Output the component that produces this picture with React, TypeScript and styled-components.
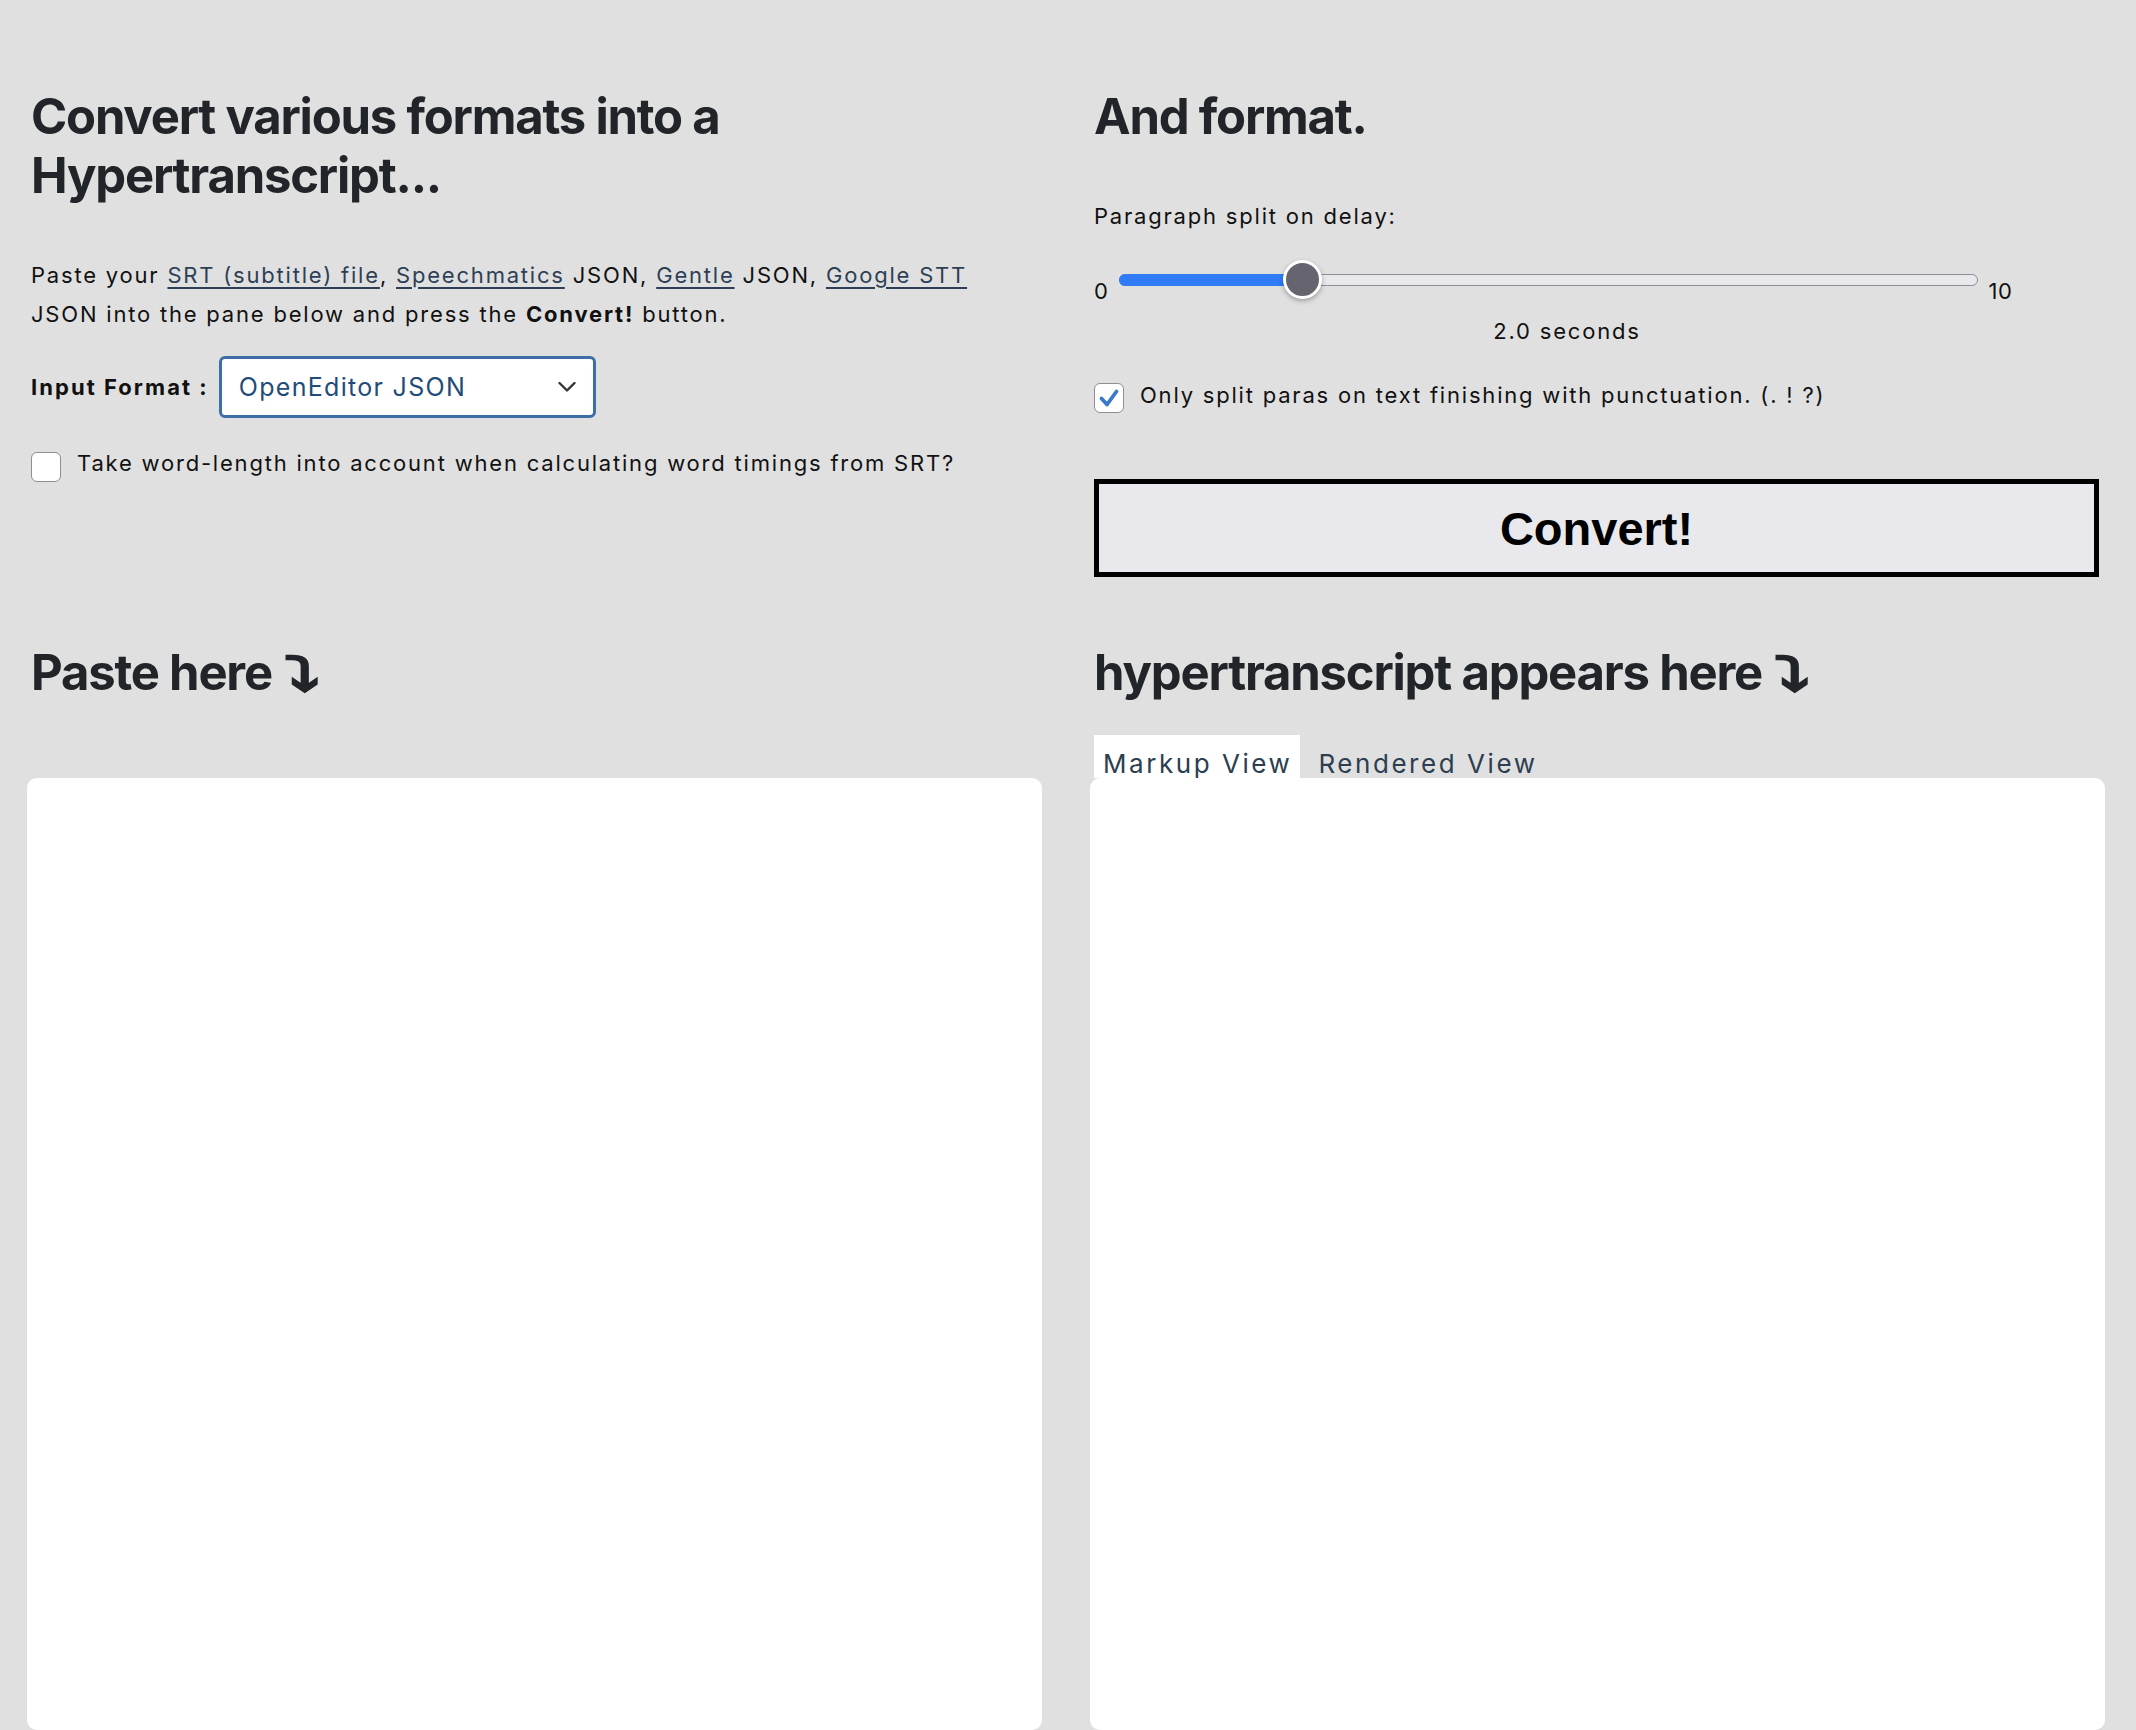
import React from 'react';
import styled, { createGlobalStyle } from 'styled-components';

const GlobalStyle = createGlobalStyle`
  html, body { margin: 0; padding: 0; background: #e0e0e0; }
  body { font-family: Inter, "Noto Sans", sans-serif; color: #111; overflow: hidden; }
  * { box-sizing: border-box; }
`;

const Page = styled.div`
  padding: 87px 31px 0 27px;
  height: 1730px;
  overflow: hidden;
`;

const Grid = styled.section<{ $top?: number }>`
  display: grid;
  grid-template-columns: 1015px 1015px;
  column-gap: 48px;
  align-items: start;
  margin-top: ${(p) => p.$top ?? 0}px;
`;

const Column = styled.div`
  display: flex;
  flex-direction: column;
  padding: 0 6px 0 4px;
`;

const PaneColumn = styled.div`
  display: flex;
  flex-direction: column;
`;

const Title = styled.h1<{ $after?: number }>`
  margin: 0 0 ${(p) => p.$after ?? 0}px;
  font-size: 49px;
  line-height: 59px;
  font-weight: 700;
  color: #212529;
  letter-spacing: -1.2px;
`;

const PaneTitle = styled(Title)`
  padding-left: 4px;
`;

const Arrow = styled.span`
  display: inline-block;
  font-family: "DejaVu Sans", sans-serif;
  font-weight: 700;
  font-size: 46px;
  line-height: 0;
  transform: scaleX(1.55);
  transform-origin: left center;
  -webkit-text-stroke: 1.2px #212529;
  margin-left: 2px;
`;

const Para = styled.p<{ $top: number }>`
  margin: ${(p) => p.$top}px 0 0;
  max-width: 985px;
  font-size: 22px;
  line-height: 39px;
  letter-spacing: 1.8px;
  color: #111;
`;

const Link = styled.a`
  color: #2d3f55;
  text-decoration: underline;
  text-decoration-thickness: 1.5px;
  text-underline-offset: 4px;
`;

const FormatRow = styled.div`
  display: flex;
  align-items: center;
  gap: 10px;
  margin-top: 22.5px;
`;

const FieldLabel = styled.label`
  font-size: 22px;
  line-height: 27px;
  font-weight: 700;
  letter-spacing: 2.05px;
  color: #111;
`;

const SelectWrap = styled.div`
  position: relative;
  width: 377px;
  height: 62px;
`;

const Select = styled.select`
  appearance: none;
  -webkit-appearance: none;
  width: 100%;
  height: 100%;
  border: 3px solid #3d6ea6;
  border-radius: 6px;
  background: #fff;
  color: #1f4c78;
  font-family: Inter, "Noto Sans", sans-serif;
  font-size: 25px;
  letter-spacing: 1.3px;
  padding: 0 44px 0 17px;
  outline: none;
`;

const Chevron = styled.svg`
  position: absolute;
  right: 20px;
  top: 50%;
  transform: translateY(-50%);
  pointer-events: none;
`;

const CheckRow = styled.label<{ $top: number }>`
  display: flex;
  align-items: center;
  gap: 16px;
  margin-top: ${(p) => p.$top}px;
  font-size: 22px;
  letter-spacing: 1.8px;
  color: #111;
`;

const Box = styled.span<{ $on?: boolean }>`
  flex-shrink: 0;
  width: 30px;
  height: 30px;
  border: 1.5px solid #8e8e93;
  border-radius: 6px;
  background: #fff;
  display: flex;
  align-items: center;
  justify-content: center;
`;

const CheckText = styled.span`
  line-height: 27px;
  padding-bottom: 6px;
`;

const SliderRow = styled.div`
  display: flex;
  align-items: flex-start;
  margin-top: 24px;
`;

const Num = styled.span`
  margin-top: 18px;
  font-size: 22px;
  line-height: 27px;
  letter-spacing: 0.6px;
  color: #111;
`;

const Slider = styled.div`
  position: relative;
  width: 859px;
  height: 39px;
  margin: 0 10px 0 11px;
`;

const Track = styled.div`
  position: absolute;
  left: 0;
  right: 0;
  top: 14px;
  height: 12px;
  border-radius: 6px;
  background: #e8e8ed;
  border: 1.5px solid #8f8e99;
`;

const Fill = styled.div`
  position: absolute;
  left: 0;
  top: 14px;
  height: 12px;
  border-radius: 6px 0 0 6px;
  background: #2f7cf6;
`;

const Thumb = styled.div`
  position: absolute;
  top: 0;
  width: 39px;
  height: 39px;
  border-radius: 50%;
  background: #66656f;
  border: 3.5px solid #fff;
  box-shadow: 0 2px 5px rgba(0, 0, 0, 0.3);
`;

const Seconds = styled.div`
  width: 946px;
  margin-top: 13px;
  text-align: center;
  font-size: 22px;
  line-height: 27px;
  letter-spacing: 1.8px;
  color: #111;
`;

const ConvertButton = styled.button`
  margin-top: 64.5px;
  width: 100%;
  height: 98px;
  border: 5px solid #000;
  border-radius: 0;
  background: #e9e9ed;
  color: #000;
  font-family: "Liberation Sans", Arial, sans-serif;
  font-weight: 700;
  font-size: 47px;
  cursor: pointer;
`;

const Tabs = styled.div`
  display: flex;
  gap: 9px;
  padding-left: 4px;
  height: 43px;
`;

const Tab = styled.button<{ $active?: boolean }>`
  height: 43px;
  padding: 14px 8px 0 9px;
  border: none;
  border-radius: 0;
  background: ${(p) => (p.$active ? '#fff' : 'transparent')};
  color: #2c3e50;
  font-family: Inter, "Noto Sans", sans-serif;
  font-size: 26px;
  line-height: 27px;
  letter-spacing: 2.55px;
  overflow: hidden;
  display: block;
  text-align: left;
  white-space: nowrap;
`;

const Pane = styled.textarea`
  display: block;
  width: 100%;
  height: 952px;
  border: none;
  border-radius: 10px;
  background: #fff;
  resize: none;
  outline: none;
  padding: 12px;
  font-family: "Liberation Mono", monospace;
  font-size: 18px;
`;

const value = 2;
const max = 10;
const sliderWidth = 859;
const thumb = 39;

export default function App() {
  const thumbLeft = (value / max) * (sliderWidth - thumb);
  return (
    <>
      <GlobalStyle />
      <Page>
        <Grid>
          <Column>
            <Title>Convert various formats into a Hypertranscript...</Title>
            <Para $top={50.5}>
              Paste your <Link href="#">SRT (subtitle) file</Link>, <Link href="#">Speechmatics</Link> JSON,{' '}
              <Link href="#">Gentle</Link> JSON, <Link href="#">Google STT</Link> JSON into the pane below and press
              the <b>Convert!</b> button.
            </Para>
            <FormatRow>
              <FieldLabel htmlFor="fmt">Input Format :</FieldLabel>
              <SelectWrap>
                <Select id="fmt" defaultValue="openeditor">
                  <option value="openeditor">OpenEditor JSON</option>
                  <option value="srt">SRT</option>
                  <option value="speechmatics">Speechmatics JSON</option>
                  <option value="gentle">Gentle JSON</option>
                  <option value="google">Google STT JSON</option>
                </Select>
                <Chevron width="18" height="11" viewBox="0 0 18 11">
                  <path d="M1.5 1.5 L9 9 L16.5 1.5" fill="none" stroke="#333" strokeWidth="2.4" strokeLinecap="round" strokeLinejoin="round" />
                </Chevron>
              </SelectWrap>
            </FormatRow>
            <CheckRow $top={32}>
              <Box />
              <CheckText>Take word-length into account when calculating word timings from SRT?</CheckText>
            </CheckRow>
          </Column>
          <Column>
            <Title>And format.</Title>
            <Para $top={50.5}>Paragraph split on delay:</Para>
            <SliderRow>
              <Num>0</Num>
              <Slider>
                <Track />
                <Fill style={{ width: thumbLeft + thumb / 2 }} />
                <Thumb style={{ left: thumbLeft }} />
              </Slider>
              <Num>10</Num>
            </SliderRow>
            <Seconds>2.0 seconds</Seconds>
            <CheckRow $top={37}>
              <Box $on>
                <svg width="22" height="20" viewBox="0 0 22 20">
                  <path d="M3.5 10.5 L9 16.5 L18.5 3.5" fill="none" stroke="#3a78c9" strokeWidth="3.8" strokeLinecap="round" strokeLinejoin="round" />
                </svg>
              </Box>
              <CheckText>Only split paras on text finishing with punctuation. (. ! ?)</CheckText>
            </CheckRow>
            <ConvertButton>Convert!</ConvertButton>
          </Column>
        </Grid>
        <Grid $top={65.5}>
          <PaneColumn>
            <PaneTitle $after={76.5}>
              Paste here <Arrow>⤵</Arrow>
            </PaneTitle>
            <Pane />
          </PaneColumn>
          <PaneColumn>
            <PaneTitle $after={33.5}>
              hypertranscript appears here <Arrow>⤵</Arrow>
            </PaneTitle>
            <Tabs>
              <Tab $active>Markup View</Tab>
              <Tab>Rendered View</Tab>
            </Tabs>
            <Pane />
          </PaneColumn>
        </Grid>
      </Page>
    </>
  );
}
